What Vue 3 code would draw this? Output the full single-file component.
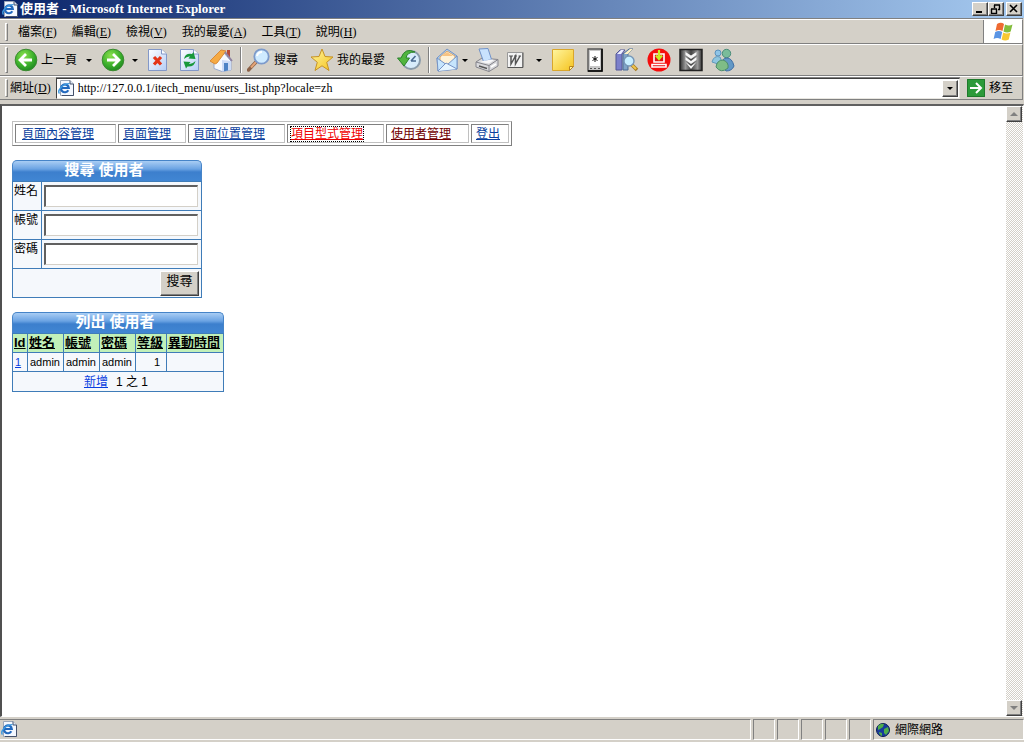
<script setup>
import { ref } from 'vue'

const address = ref('http://127.0.0.1/itech_menu/users_list.php?locale=zh')

const menus = [
  { label: '檔案', key: 'F' },
  { label: '編輯', key: 'E' },
  { label: '檢視', key: 'V' },
  { label: '我的最愛', key: 'A' },
  { label: '工具', key: 'T' },
  { label: '說明', key: 'H' },
]

const links = [
  { label: '頁面內容管理', kind: 'first' },
  { label: '頁面管理', kind: 'short' },
  { label: '頁面位置管理', kind: 'long' },
  { label: '項目型式管理', kind: 'long active' },
  { label: '使用者管理', kind: 'mid visited' },
  { label: '登出', kind: 'tiny' },
]

const fields = [
  { id: 'name', label: '姓名' },
  { id: 'account', label: '帳號' },
  { id: 'password', label: '密碼' },
]
const form = ref({ name: '', account: '', password: '' })

const columns = [
  { label: 'Id', cls: 'c-id' },
  { label: '姓名', cls: 'c-text' },
  { label: '帳號', cls: 'c-text' },
  { label: '密碼', cls: 'c-text' },
  { label: '等級', cls: 'c-level' },
  { label: '異動時間', cls: 'c-time' },
]
</script>

<template>
  <div class="window">
    <svg class="defs" width="0" height="0" aria-hidden="true">
      <defs>
        <symbol id="ie" viewBox="0 0 16 16">
          <path d="M2.500 .5h9.500l3.500 3.500v11.500h-13z" fill="#f4f8ff" stroke="#9aa6b8" />
          <path d="M15.500 4v11.500H4" fill="none" stroke="#44506a" />
          <path d="M12 .5v3.500h3.500" fill="#dfe8f5" stroke="#44506a" />
          <path d="M10.300 10.300A3.900 3.900 0 1 1 10.800 8H4" fill="none" stroke="#2268bd" stroke-width="2.200" />
          <path d="M1.500 13.500C-1 11 4.500 3.500 11.500 3.600" fill="none" stroke="#3b98e0" stroke-width="1.400" />
        </symbol>
        <radialGradient id="green" cx=".4" cy=".3" r=".75">
          <stop offset="0" stop-color="#8be04c" /><stop offset=".6" stop-color="#3cb02c" /><stop offset="1" stop-color="#1c8420" />
        </radialGradient>
        <linearGradient id="paper" x1="0" y1="0" x2="1" y2="1">
          <stop offset="0" stop-color="#fff" /><stop offset="1" stop-color="#b5cdf5" />
        </linearGradient>
        <linearGradient id="gold" x1="0" y1="0" x2="1" y2="1">
          <stop offset="0" stop-color="#fff6a0" /><stop offset="1" stop-color="#f5c31e" />
        </linearGradient>
        <linearGradient id="metal" x1="0" x2="1" y1="0" y2="0">
          <stop offset="0" stop-color="#333" /><stop offset=".25" stop-color="#999" /><stop offset=".5" stop-color="#444" /><stop offset=".8" stop-color="#999" /><stop offset="1" stop-color="#333" />
        </linearGradient>
      </defs>
    </svg>

    <header class="titlebar">
      <svg class="i16"><use href="#ie" /></svg>
      <h1>使用者 - Microsoft Internet Explorer</h1>
      <div class="controls">
        <button class="cap" aria-label="最小化"><svg width="12" height="10"><path d="M2 8h6" stroke="#000" stroke-width="2" /></svg></button>
        <button class="cap" aria-label="還原"><svg width="12" height="10"><path d="M4 1h6M9.500 1v5M4.500 1v3M8 5.500h2M1 5h6M1.500 5v4.500h5V5" fill="none" stroke="#000" stroke-width="1.400" /></svg></button>
        <button class="cap close" aria-label="關閉"><svg width="12" height="10"><path d="M2 1l7 7M9 1L2 8" stroke="#000" stroke-width="1.600" /></svg></button>
      </div>
    </header>

    <div class="bar menubar">
      <i class="handle"></i>
      <nav>
        <button v-for="m in menus" :key="m.key">{{ m.label }}(<u>{{ m.key }}</u>)</button>
      </nav>
      <div class="flag">
        <svg width="22" height="20" viewBox="0 0 22 20">
          <path d="M5 2q4-2.500 7 0l-1.500 7q-3.500-2-7 0z" fill="#ee6a32" />
          <path d="M13 2.600q4 2 7.500 0l-1.800 7q-3.500 2-7.200 0z" fill="#83bd3c" />
          <path d="M3.200 10q3.500-2 7 0l-1.600 7q-3.500-2.200-7 0z" fill="#5a94e4" />
          <path d="M11.200 10.600q3.600 2 7.200 0l-1.600 7q-3.600 2-7.200 0z" fill="#f8c832" />
        </svg>
      </div>
    </div>

    <div class="bar toolbar">
      <i class="handle"></i>
      <button class="tool">
        <svg class="i24" viewBox="0 0 24 24"><circle cx="12" cy="12" r="10.800" fill="url(#green)" stroke="#3b8a30" /><path d="M12 6l-6 6 6 6M7 12h11" fill="none" stroke="#fff" stroke-width="2.800" /></svg>
        <span>上一頁</span>
      </button>
      <button class="drop wide" aria-label="上一頁選單"><i class="tri"></i></button>
      <button class="tool" aria-label="下一頁">
        <svg class="i24" viewBox="0 0 24 24"><circle cx="12" cy="12" r="10.800" fill="url(#green)" stroke="#3b8a30" /><path d="M12 6l6 6-6 6M17 12H6" fill="none" stroke="#fff" stroke-width="2.800" /></svg>
      </button>
      <button class="drop" aria-label="下一頁選單"><i class="tri"></i></button>
      <button class="tool" aria-label="停止">
        <svg class="i24" viewBox="0 0 24 24"><path d="M3.500 1.500h13l5 4.500v16.500h-18z" fill="url(#paper)" stroke="#8398c8" /><path d="M16.500 1.500V6h5" fill="#fff" stroke="#8398c8" /><path d="M9 9l7 7.500M16 9l-7 7.500" stroke="#e43417" stroke-width="3.200" /></svg>
      </button>
      <button class="tool" aria-label="重新整理">
        <svg class="i24" viewBox="0 0 24 24"><path d="M3.500 1.500h13l5 4.500v16.500h-18z" fill="url(#paper)" stroke="#8398c8" /><path d="M16.500 1.500V6h5" fill="#fff" stroke="#8398c8" /><path d="M7 11q1-6 8-5l1.500-2 2 7-7-.5 1.500-2q-3-.5-6 2.500zM18.500 13q-1 6-8 5.500L9 20.500l-2.500-7 7 .5-1.500 2q3 .5 6.500-3z" fill="#17983a" /></svg>
      </button>
      <button class="tool" aria-label="首頁">
        <svg class="i24" viewBox="0 0 24 24"><path d="M18 2h3v7h-3z" fill="#b84a38" /><path d="M5 13l10-8 7 8v9l-9 1.500-8-3z" fill="#f6f9ff" stroke="#98a8cc" /><path d="M13 23.500V12l9 1v9z" fill="#cddcf7" /><path d="M1 13L12 2l5 1-9 12-2 1z" fill="#f6aa43" stroke="#d98a38" /><path d="M16 4l7 9" stroke="#8e80a0" stroke-width="1.800" /><path d="M15 15h4v7.500l-4 .7z" fill="#4e83c5" /></svg>
      </button>
      <i class="sep"></i>
      <button class="tool">
        <svg class="i24" viewBox="0 0 24 24"><path d="M9 14L1.500 22" stroke="#8c6248" stroke-width="3.500" stroke-linecap="round" /><path d="M9 14l-5 5.500" stroke="#e5a577" stroke-width="2" /><circle cx="14.500" cy="8.500" r="7.200" fill="#cfebff" stroke="#7c9acb" stroke-width="1.800" /><path d="M10 8q1-4 5-4" fill="none" stroke="#fff" stroke-width="2" /></svg>
        <span>搜尋</span>
      </button>
      <button class="tool gap">
        <svg class="i24" viewBox="0 0 24 24"><path d="M12 1l3 7.500 8 .5-6.300 5.300L19 22.500l-7-4.700-7 4.700 2.300-8.200L1 9l8-.5z" fill="url(#gold)" stroke="#c69225" /></svg>
        <span>我的最愛</span>
      </button>
      <button class="tool gap" aria-label="記錄">
        <svg class="i24" viewBox="0 0 24 24"><circle cx="14" cy="12" r="9" fill="#d8ecfb" stroke="#8a9baa" stroke-width="2" /><path d="M14 13l4.500-5M14 13h5" stroke="#496990" stroke-width="1.600" /><path d="M18 4Q8-1 4 10H.5l6.500 8 5.500-8H9Q10 4 18 4z" fill="#51b53f" stroke="#2b832c" /></svg>
      </button>
      <i class="sep"></i>
      <button class="tool tight" aria-label="郵件">
        <svg class="i24" viewBox="0 0 24 24"><path d="M2 10l10-9 10 7v13L3 23z" fill="#a9d2f5" stroke="#7794c5" /><path d="M5 9l7-6 8 5v5l-9 4-6-4z" fill="#fff3d8" stroke="#d7a46b" /><path d="M7 8l5-4 6 4z" fill="#f8c381" /><path d="M2 10l10 7 10-9v13L3 23z" fill="#c6e5fd" stroke="#7794c5" /><path d="M3 23l8-8 11 6" fill="#e6f5ff" stroke="#7794c5" /></svg>
      </button>
      <button class="drop" aria-label="郵件選單"><i class="tri"></i></button>
      <button class="tool tight" aria-label="列印">
        <svg class="i24" viewBox="0 0 24 24"><path d="M1 14l6-4 16 1.500V18l-9 5.500L1 19z" fill="#d9d9dc" stroke="#85858c" /><path d="M4 1l9-.5 3.500 11-8 2z" fill="#c8e2fd" stroke="#7192c8" /><path d="M1 14l13 3.500 9-6M14 17.500v6" fill="none" stroke="#85858c" /><path d="M5 14l3-1 8-1.500 3 .5-5 3.500z" fill="#f8f8fa" /><path d="M4 18l8 2.500" stroke="#555" stroke-width="1.400" /><path d="M16 19l5-3" stroke="#fff" stroke-width="1.500" /></svg>
      </button>
      <button class="tool" aria-label="編輯">
        <svg class="i24" viewBox="0 0 24 24"><path d="M4.500 4.500h15v15h-15z" fill="#f3f3f3" stroke="#999" /><path d="M4.500 19.500h15.500v-15" fill="none" stroke="#555" /><path d="M6 8h4M11 8h3M15.500 8h2.500" stroke="#555" stroke-width="1.200" /><path d="M8 8v8l4.500-8v8L17 8" fill="none" stroke="#555" stroke-width="1.500" /></svg>
      </button>
      <button class="drop wide" aria-label="編輯選單"><i class="tri"></i></button>
      <button class="tool" aria-label="便箋">
        <svg class="i24" viewBox="0 0 24 24"><path d="M1.500 1.500h21v17l-4 4h-17z" fill="url(#gold)" stroke="#d9a62c" /><path d="M18.500 22.500v-4h4z" fill="#fff3a4" stroke="#b88620" /></svg>
      </button>
      <button class="tool" aria-label="裝置">
        <svg class="i24" viewBox="0 0 24 24"><path d="M5 1h14v22H5z" fill="#c8c8c8" stroke="#555" stroke-width="1.400" /><path d="M7 3h10v15H7z" fill="#fff" /><path d="M19 1v22H5" fill="none" stroke="#000" stroke-width="1.500" /><path d="M12 8v6M9.500 9.500l5 3M14.500 9.500l-5 3" stroke="#111" /><path d="M7 20.500h2M11 20.500h2M15 20.500h2" stroke="#555" stroke-width="1.200" /></svg>
      </button>
      <button class="tool" aria-label="參考資料">
        <svg class="i24" viewBox="0 0 24 24"><path d="M1 6l4-4h5L7 6v16H1z" fill="#7c80cb" stroke="#535696" /><path d="M2 6l4-4h3L6 6z" fill="#eef" /><path d="M8 6l6-5h4l-5 5v16H8z" fill="#80a4c8" stroke="#4b6b95" /><path d="M9 6l6-5h3l-5 5z" fill="#fff1c5" /><path d="M17 17l5 5" stroke="#a77c22" stroke-width="3.500" /><path d="M17 17l4 4" stroke="#f0c54d" stroke-width="2" /><circle cx="14" cy="13" r="5" fill="#c6edff" stroke="#7696b7" stroke-width="1.400" /></svg>
      </button>
      <button class="tool" aria-label="下載">
        <svg class="i24" viewBox="0 0 24 24"><circle cx="12" cy="12" r="11.500" fill="#f50d0d" /><path d="M7 6h10v8H7zM5 16.500h14v2.500H5z" fill="#e01010" stroke="#fff" stroke-width="1.600" /><path d="M12 2v8M9 7.500l3 3.500 3-3.500" fill="none" stroke="#c8ee22" stroke-width="2.200" /></svg>
      </button>
      <button class="tool" aria-label="全部下載">
        <svg class="i24" viewBox="0 0 24 24"><path d="M1 1.500h22v21H1z" fill="url(#metal)" stroke="#222" stroke-width="1.500" /><path d="M6.500 4l5.500 3.500L17.500 4v3L12 11 6.500 7zM6.500 9l5.500 4 5.500-4v3L12 16l-5.500-4zM6.500 14l5.500 4 5.500-4-5.500 7z" fill="#f7f7f7" /></svg>
      </button>
      <button class="tool" aria-label="Messenger">
        <svg class="i24" viewBox="0 0 24 24"><circle cx="7" cy="5" r="3" fill="#8fc4e7" stroke="#5a91bc" /><path d="M1 14q2-7 8-5l2 5-4 2z" fill="#8fc6df" stroke="#6298bd" /><circle cx="15.500" cy="5.500" r="4.200" fill="#7abc9a" stroke="#4c8d7b" /><path d="M11 18q-1-8 5-8 5 0 7 8-2 5-8 5z" fill="#6298c6" stroke="#416fa4" /><path d="M5 19q1-7 7-7 6 2 5 8-7 6-12-1z" fill="#7fbd86" stroke="#4c8d6b" /></svg>
      </button>
    </div>

    <form class="bar addressbar" @submit.prevent>
      <i class="handle"></i>
      <label for="address">網址(<u>D</u>)</label>
      <div class="combo">
        <svg class="i16"><use href="#ie" /></svg>
        <input id="address" v-model="address" type="text" />
        <button type="button" class="raised" aria-label="網址清單"><i class="tri"></i></button>
      </div>
      <button class="go">
        <svg width="18" height="18" viewBox="0 0 18 18"><path d="M0 0h18v18H0z" fill="#2c9a3a" /><path d="M.5.5h17v17H.5z" fill="none" stroke="#1f7a2c" /><path d="M9 4l5 5-5 5M13 9H3" fill="none" stroke="#fff" stroke-width="2" /></svg>
        <span>移至</span>
      </button>
    </form>

    <div class="view">
      <main>
        <table class="nav">
          <tbody>
            <tr>
              <td v-for="l in links" :key="l.label" :class="l.kind"><a href="#">{{ l.label }}</a></td>
            </tr>
          </tbody>
        </table>

        <form class="panel search" @submit.prevent>
          <h2>搜尋 使用者</h2>
          <table>
            <tbody>
              <tr v-for="f in fields" :key="f.id">
                <th><label :for="f.id">{{ f.label }}</label></th>
                <td><input :id="f.id" v-model="form[f.id]" type="text" /></td>
              </tr>
              <tr>
                <td colspan="2" class="submit"><button>搜尋</button></td>
              </tr>
            </tbody>
          </table>
        </form>

        <section class="panel list">
          <h2>列出 使用者</h2>
          <table>
            <thead>
              <tr>
                <th v-for="c in columns" :key="c.label" :class="c.cls"><a href="#">{{ c.label }}</a></th>
              </tr>
            </thead>
            <tbody>
              <tr>
                <td><a href="#">1</a></td>
                <td>admin</td>
                <td>admin</td>
                <td>admin</td>
                <td class="num">1</td>
                <td></td>
              </tr>
            </tbody>
            <tfoot>
              <tr>
                <td colspan="6"><a href="#">新增</a><span>1 之 1</span></td>
              </tr>
            </tfoot>
          </table>
        </section>
      </main>
      <div class="scroll">
        <button class="raised" aria-label="向上捲動"><i class="tri up"></i></button>
        <button class="raised" aria-label="向下捲動"><i class="tri dim"></i></button>
      </div>
    </div>

    <footer class="status">
      <div class="cell grow"><svg class="i16"><use href="#ie" /></svg></div>
      <div v-for="n in 5" :key="n" class="cell box"></div>
      <div class="cell zone">
        <svg width="14" height="14" viewBox="0 0 14 14"><circle cx="7" cy="7" r="6.500" fill="#183c9c" stroke="#0b1c52" /><path d="M2 3q3-3 6-2L7 4 4 6 2 7zM8 6l4-2 1 4-3 4-2-2zM3 9l3 1v3q-3-1-3-4z" fill="#4fae4a" /></svg>
        <span>網際網路</span>
      </div>
    </footer>
  </div>
</template>

<style>
body { margin: 0; overflow: hidden; }
</style>

<style scoped>
.window {
  display: flex;
  flex-direction: column;
  height: 100vh;
  box-sizing: border-box;
  padding-bottom: 2px;
  background: #d4d0c8;
  color: #000;
  font: 12px/16px "Liberation Serif", "Noto Sans CJK TC", serif;
}
.window * { box-sizing: border-box; }
.defs { position: absolute; }
button { padding: 0; border: 0; background: none; color: inherit; font: inherit; white-space: nowrap; }
svg { flex: none; display: block; }
.i16 { width: 16px; height: 16px; }
.i24 { width: 24px; height: 24px; }

.titlebar {
  display: flex;
  align-items: center;
  height: 18px;
  flex: none;
  padding: 0 2px;
  gap: 2px;
  background: linear-gradient(90deg, #0a246a, #a6caf0);
}
.titlebar h1 { flex: 1; margin: 0; color: #fff; font-size: 13px; line-height: 18px; font-weight: bold; }
.controls { display: flex; }
.cap, .raised {
  display: flex;
  align-items: center;
  justify-content: center;
  width: 16px;
  height: 14px;
  background: #d4d0c8;
  border: 1px solid;
  border-color: #fff #404040 #404040 #fff;
  box-shadow: inset -1px -1px #808080;
}
.close { margin-left: 2px; }

.bar {
  display: flex;
  align-items: center;
  flex: none;
  padding-left: 5px;
  border-top: 1px solid #fff;
  border-bottom: 1px solid #808080;
  border-right: 1px solid #808080;
  margin-right: 1px;
}
.handle { width: 3px; height: 18px; flex: none; border: 1px solid; border-color: #fff #808080 #808080 #fff; }
.menubar { height: 25px; margin-top: 1px; box-shadow: 0 -1px #808080; }
.menubar nav { display: flex; flex: 1; gap: 15px; padding-left: 10px; }
.flag { display: flex; align-items: center; justify-content: center; align-self: stretch; width: 39px; background: #fff; border-left: 1px solid #808080; }

.toolbar { height: 32px; }
.toolbar .handle { height: 26px; margin-right: 2px; }
.tool { display: flex; align-items: center; gap: 3px; padding: 0 4px; flex: none; }
.tool.gap { margin-left: 4px; }
.tool.tight { padding-right: 0; }
.drop { display: flex; justify-content: center; width: 12px; flex: none; }
.drop.wide { width: 16px; }
.tri { border: 3px solid transparent; border-top-color: #000; border-bottom: 0; }
.sep { width: 2px; height: 26px; flex: none; margin: 0 1px 0 3px; border-left: 1px solid #808080; border-right: 1px solid #fff; }

.addressbar { height: 24px; }
.addressbar .handle { margin-right: 2px; }
.combo {
  display: flex;
  align-items: center;
  flex: 1;
  height: 21px;
  margin: 0 7px 0 5px;
  padding: 0 1px;
  background: #fff;
  border: 1px solid;
  border-color: #404040 #e8e6e0 #e8e6e0 #404040;
  box-shadow: 0 -1px #808080;
}
.combo input { flex: 1; min-width: 0; padding: 0 4px; border: 0; outline: 0; background: none; font: inherit; }
.combo .raised { height: 17px; }
.go { display: flex; align-items: center; gap: 4px; padding-right: 9px; }

.view {
  display: flex;
  flex: 1;
  min-height: 0;
  margin-top: 4px;
  background: #fff;
  border: 2px solid;
  border-color: #606060 #fff #fff #505050;
  border-right-width: 1px;
  border-bottom-width: 1px;
}
main {
  flex: 1;
  padding: 15px 10px;
  font: 12px/16px "Liberation Sans", "Noto Sans CJK TC", sans-serif;
}
a { color: #0a3f9e; }

.nav { border: 1px solid; border-color: #c0c0c0 #808080 #808080 #c0c0c0; border-spacing: 2px; height: 25px; table-layout: fixed; width: 500px; }
.nav td { padding: 0 4px; line-height: 16px; border: 1px solid; border-color: #808080 #c0c0c0 #c0c0c0 #808080; }
.nav .first { width: 101px; padding-left: 6px; }
.nav .short { width: 68px; }
.nav .long { width: 97px; }
.nav .mid { width: 83px; }
.nav .active { padding-left: 3px; }
.nav .active a { color: #f00000; outline: 1px dotted #000; }
.nav .visited a { color: #700000; }

.panel { margin-top: 14px; }
.search { width: 190px; }
.list { width: 212px; }
.panel h2 {
  margin: 0;
  height: 21px;
  padding-right: 6px;
  border-radius: 5px 5px 0 0;
  border: 1px solid #4684c8;
  border-bottom: 0;
  background: linear-gradient(#a9cdf4, #6ba3e3 40%, #3c7fcd 55%, #4186d3);
  color: #fff;
  font-size: 15px;
  line-height: 17px;
  text-align: center;
}
.panel table { width: 100%; border-collapse: collapse; table-layout: fixed; background: #f5f8fc; }
.panel th, .panel td { padding: 0 1px; border: 1px solid #3f7cb8; }
.search tr { height: 29px; }
.search th { width: 29px; font-weight: normal; vertical-align: top; text-align: left; line-height: 18px; }
.search input {
  display: block;
  width: 154px;
  height: 22px;
  margin-left: 1px;
  background: #fff;
  border: 2px solid;
  border-color: #606060 #d4d0c8 #d4d0c8 #606060;
  border-right-width: 1px;
  border-bottom-width: 1px;
  outline: 0;
}
.submit button {
  display: block;
  width: 39px;
  height: 25px;
  margin: 0 1px 0 auto;
  padding-bottom: 4px;
  font-size: 13px;
  background: #d4d0c8;
  border: 1px solid;
  border-color: #fff #404040 #404040 #fff;
  box-shadow: inset -1px -1px #808080;
}
.list tr { height: 19px; }
.list th { background: #c1f0b9; text-align: left; white-space: nowrap; font-size: 13px; line-height: 18px; }
.list th a { color: #000; }
.list td { padding: 0 2px; font-size: 11px; line-height: 18px; }
.list td a { color: #0a3fe0; }
.c-id { width: 15px; }
.c-text { width: 36px; }
.c-level { width: 31px; }
.list .num { text-align: right; padding-right: 6px; }
.list tfoot td { height: 20px; padding-right: 6px; text-align: center; font-size: 12px; }
.list tfoot span { margin-left: 8px; }

.scroll {
  display: flex;
  flex-direction: column;
  justify-content: space-between;
  width: 17px;
  background: repeating-conic-gradient(#d4d0c8 0 25%, #fff 0 50%) 0 0 / 2px 2px;
}
.scroll .raised { width: 16px; height: 16px; }
.tri.up { border: 4px solid transparent; border-bottom-color: #808080; border-top: 0; }
.tri.dim { border: 4px solid transparent; border-top-color: #808080; border-bottom: 0; }

.status { display: flex; flex: none; gap: 2px; height: 21px; margin-top: 2px; }
.cell { border: 1px solid; border-color: #808080 #fff #fff #808080; }
.grow { flex: 1; padding: 1px 0 0 1px; border-left: 0; }
.box { width: 22px; }
.zone { display: flex; align-items: center; gap: 5px; width: 151px; padding-left: 2px; }
</style>
